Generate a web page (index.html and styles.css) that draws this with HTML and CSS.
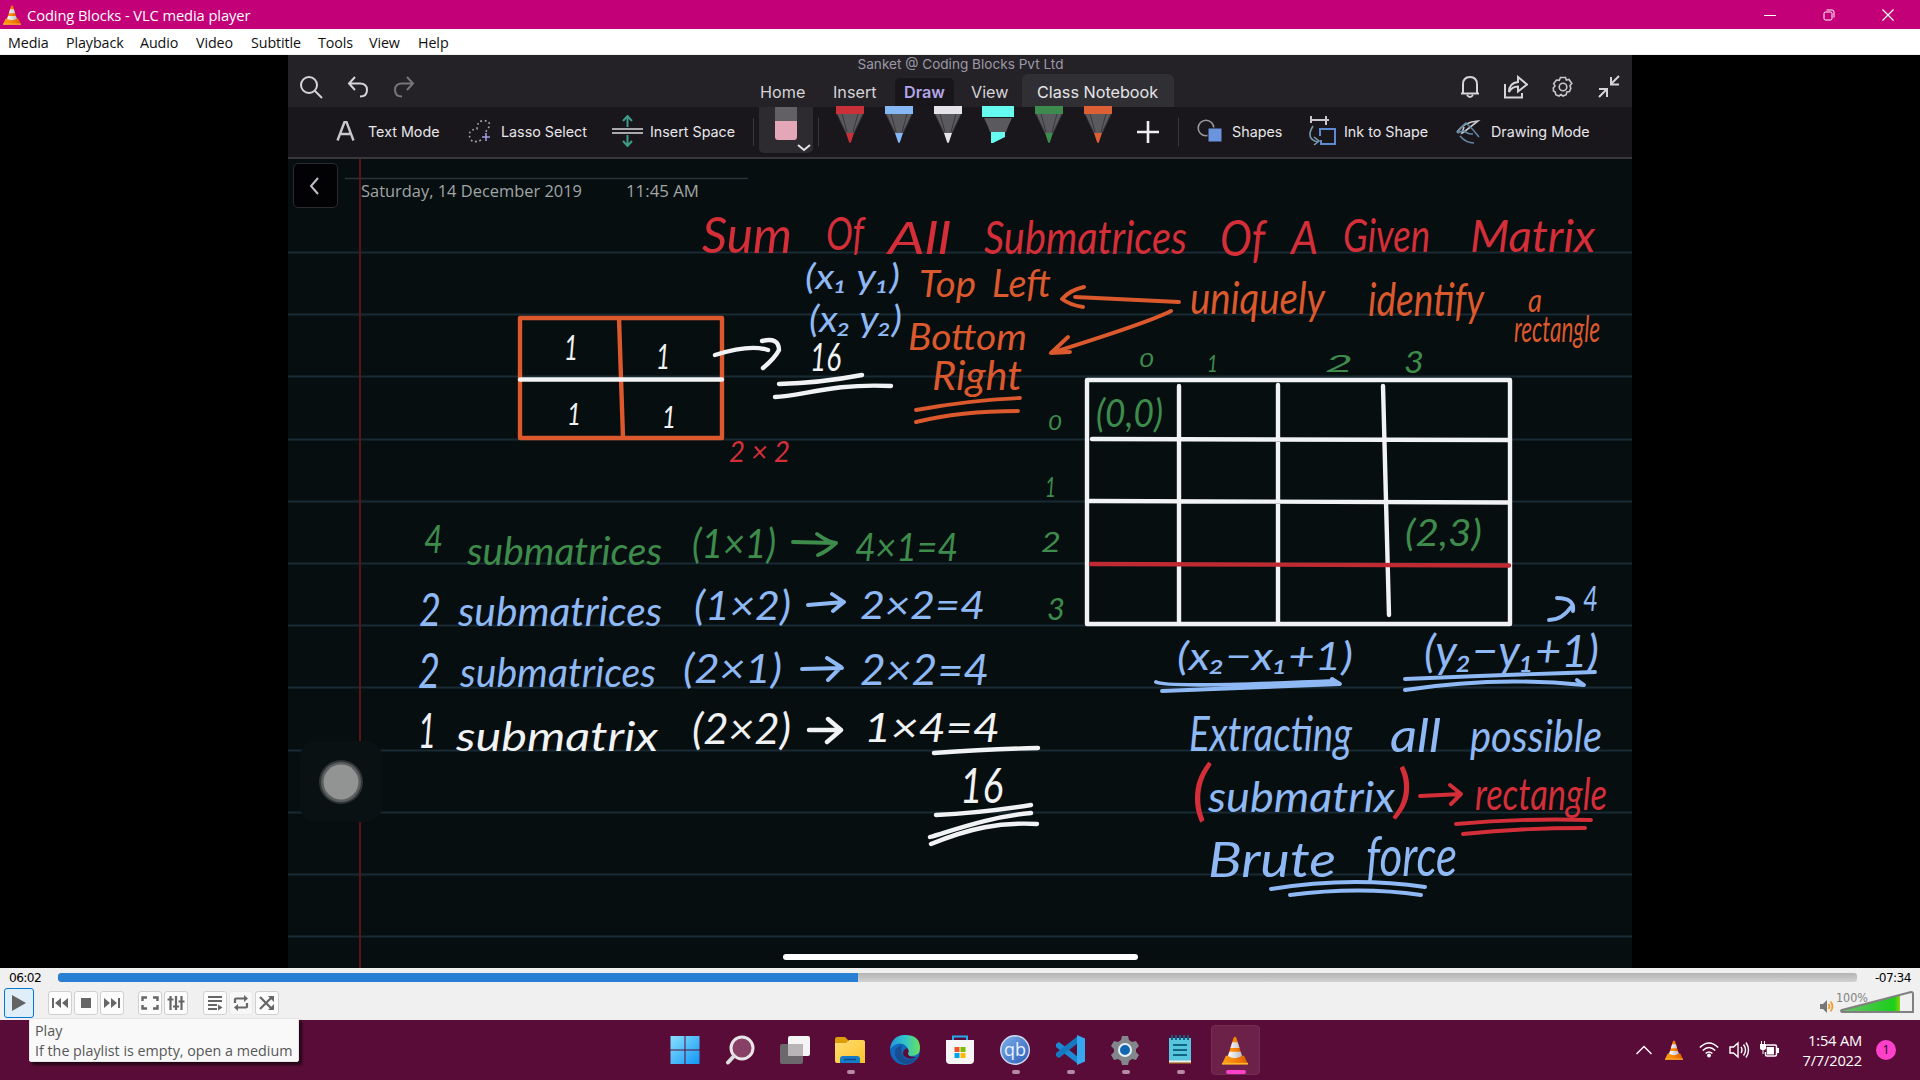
FILE: index.html
```html
<!DOCTYPE html>
<html lang="en">
<head>
<meta charset="utf-8">
<title>Coding Blocks - VLC media player</title>
<link rel="stylesheet" href="styles.css">
</head>
<body>
<svg class="defs" width="0" height="0" aria-hidden="true">
  <defs>
    <linearGradient id="coneOrange"><stop offset="0" stop-color="#ffa21a"/><stop offset=".6" stop-color="#f47b00"/><stop offset="1" stop-color="#d95f00"/></linearGradient>
    <linearGradient id="coneWhite"><stop offset="0" stop-color="#fff"/><stop offset="1" stop-color="#b9bcc0"/></linearGradient>
    <linearGradient id="winBlue" x2="1" y2="1"><stop offset="0" stop-color="#8ae0ff"/><stop offset="1" stop-color="#1196f5"/></linearGradient>
    <linearGradient id="edgeTop"><stop offset="0" stop-color="#2296dc"/><stop offset=".5" stop-color="#32c4c9"/><stop offset="1" stop-color="#68e05a"/></linearGradient>
    <linearGradient id="folder" x2="1" y2="1"><stop offset="0" stop-color="#ffdd72"/><stop offset="1" stop-color="#fcc32c"/></linearGradient>
    <linearGradient id="qb" x2="1" y2="1"><stop offset="0" stop-color="#7fb0ea"/><stop offset="1" stop-color="#2a5cb8"/></linearGradient>
    <linearGradient id="vol"><stop offset="0" stop-color="#6fbd6f"/><stop offset=".9" stop-color="#18d018"/><stop offset="1" stop-color="#8fd010"/></linearGradient>
    <symbol id="cone" viewBox="0 0 20 22">
      <path d="M3 15h14l3 6.500H0z" fill="url(#coneOrange)"/>
      <path d="M0 20.500h20v1.300H0z" fill="#ffb52e"/>
      <path d="M8.800 1.500Q10-.5 11.200 1.500L15.600 16Q10 20 4.400 16z" fill="url(#coneOrange)"/>
      <path d="M7.900 4.700h4.200l1.400 4.300h-7zM5.600 12h8.800l1 3.300Q10 18.500 4.600 15.300z" fill="url(#coneWhite)"/>
    </symbol>
    <symbol id="pen" viewBox="0 0 28 38">
      <path d="M0 0h28v8H0z" fill="currentColor"/>
      <path d="M1 8h26l-9 19h-8z" fill="#5a5a5e"/>
      <path d="M1 8l9 19M27 8l-9 19M6 8l5 18M22 8l-5 18" stroke="#39393d" fill="none"/>
      <path d="M10 27h8l-3 9q-1 2-2 0z" fill="currentColor"/>
    </symbol>
  </defs>
</svg>

<header class="titlebar">
  <svg class="app-icon" width="18" height="20"><use href="#cone"/></svg>
  <span class="app-title">Coding Blocks - VLC media player</span>
  <div class="win-buttons">
    <svg width="12" height="12"><path d="M0 6.500h12" stroke="#fff"/></svg>
    <svg width="12" height="12" fill="none" stroke="#fff"><rect x="1" y="3" width="8" height="8" rx="1.500"/><path d="M3.500 1h5.500q2 0 2 2v5.500"/></svg>
    <svg width="12" height="12"><path d="M.5.500l11 11M11.500.500l-11 11" stroke="#fff" stroke-width="1.200"/></svg>
  </div>
</header>
<nav class="menubar">
  <span class="m-media">Media</span><span class="m-playback">Playback</span><span class="m-audio">Audio</span><span class="m-video">Video</span><span class="m-subtitle">Subtitle</span><span class="m-tools">Tools</span><span class="m-view">View</span><span>Help</span>
</nav>

<main class="stage">
  <section class="notebook">
    <div class="nb-head">
      <div class="nb-left">
        <svg width="24" height="24" viewBox="0 0 24 24" fill="none" stroke="#d6d4d8" stroke-width="2"><circle cx="10" cy="10" r="8"/><path d="M16 16l7 7"/></svg>
        <svg width="22" height="22" viewBox="0 0 22 22" fill="none" stroke="#d6d4d8" stroke-width="2"><path d="M8 1L2 7.500 8 14M2 7.500h11q7 0 7 6.500t-7 6.500"/></svg>
        <svg width="22" height="22" viewBox="0 0 22 22" fill="none" stroke="#77757a" stroke-width="2"><path d="M14 1l6 6.500-6 6.500M20 7.500H9q-7 0-7 6.500t7 6.500"/></svg>
      </div>
      <div class="nb-center">
        <div class="nb-title">Sanket @ Coding Blocks Pvt Ltd</div>
        <div class="tabs">
          <span class="tab t-home">Home</span><span class="tab t-insert">Insert</span><span class="tab t-draw">Draw</span><span class="tab t-view">View</span><span class="tab t-class">Class Notebook</span>
        </div>
      </div>
      <div class="nb-right">
        <svg width="20" height="24" viewBox="0 0 20 24" fill="none" stroke="#d6d4d8" stroke-width="2"><path d="M1 18.500h18M3 18V9.500Q3 2 10 2t7 7.500V18M7 20q3 4 6 0"/></svg>
        <svg width="24" height="24" viewBox="0 0 24 24" fill="none" stroke="#d6d4d8" stroke-width="2"><path d="M1 9v13.500h17V18M5 17q0-9 9-10V2l9 7.500-9 7v-5q-6 0-9 5.500z"/></svg>
        <svg width="22" height="22" viewBox="0 0 22 22" fill="none" stroke="#c8c6ca" stroke-width="1.600"><path d="M8.500 1.500h5l.8 2.600 2.700-.6 2.800 4-1.800 2 .8 3-1.300 3-2.700.5-.6 2.700-3.200 1.300-2-1.500-2 1.500-3.200-1.300-.6-2.700-1.700-1L1.300 12l1.700-2-1.300-2.500L4.500 4l2.700.3z"/><circle cx="11" cy="11" r="3.800"/></svg>
        <svg width="22" height="24" viewBox="0 0 22 24" fill="none" stroke="#d6d4d8" stroke-width="2"><path d="M21 1l-8 8M13 2v7.500h8M1 22l8-8M1 14h8v8"/></svg>
      </div>
    </div>

    <div class="ribbon">
      <div class="tool r-text"><svg width="19" height="20" viewBox="0 0 19 20" fill="none" stroke="#c9c7cb" stroke-width="2.400"><path d="M1.500 19.500L8.500 1h2l7 18.500M4.500 13h10"/></svg><span>Text Mode</span></div>
      <div class="tool r-lasso"><svg width="24" height="25" viewBox="0 0 24 25" fill="none" stroke="#a8a6aa" stroke-width="1.600"><path d="M13 21Q4 25 2 19q-3-8 7-9Q9 2 16 1.500 23 2 21 8q-2 3-4 6" stroke-dasharray="1.800 2.600"/><path d="M18 14v8M14 18h8" stroke="#9f9be0"/></svg><span>Lasso Select</span></div>
      <div class="tool r-space"><svg width="31" height="32" viewBox="0 0 31 32" fill="none" stroke-width="2"><path d="M0 14h31M0 18h31" stroke="#aaa8ad"/><path d="M15.500 12V2M11 6l4.500-5L20 6M15.500 20v10M11 26l4.500 5 4.500-5" stroke="#3f9a86"/></svg><span>Insert Space</span></div>
      <i class="sep"></i>
      <div class="eraser"><svg width="54" height="46" viewBox="0 0 54 46"><path d="M16 0h22v14H16z" fill="#626065"/><path d="M16 14h22v16q0 3-3 3H19q-3 0-3-3z" fill="#e3a7b7"/><path d="M39 38l6 5 6-5" fill="none" stroke="#e4e2e6" stroke-width="2"/></svg></div>
      <i class="sep"></i>
      <div class="pens">
        <svg class="pen-red" width="28" height="38"><use href="#pen"/></svg>
        <svg class="pen-blue" width="28" height="38"><use href="#pen"/></svg>
        <svg class="pen-white" width="28" height="38"><use href="#pen"/></svg>
        <svg width="32" height="38" viewBox="0 0 32 38"><path d="M0 0h32v11H0z" fill="#66fbf0"/><path d="M2 12h28q-4 8-6 14H8Q6 20 2 12z" fill="#5a5a5e"/><path d="M9 26h14v5l-12 6H9z" fill="#66fbf0"/></svg>
        <svg class="pen-green" width="28" height="38"><use href="#pen"/></svg>
        <svg class="pen-orange" width="28" height="38"><use href="#pen"/></svg>
      </div>
      <svg class="plus" width="22" height="24" viewBox="0 0 22 24"><path d="M11 1v22M0 12h22" stroke="#f0eef2" stroke-width="2.600"/></svg>
      <i class="sep"></i>
      <div class="tool r-shapes"><svg width="26" height="24" viewBox="0 0 26 24"><circle cx="9" cy="9" r="7.800" fill="none" stroke="#9a989d" stroke-width="1.600"/><path d="M11 9h14v14H11z" fill="#6b94de" stroke="#19171b"/></svg><span>Shapes</span></div>
      <div class="tool r-ink"><svg width="28" height="30" viewBox="0 0 28 30" fill="none" stroke-width="2"><path d="M2 4h19M3 0v7M18 0v9" stroke="#c9c7cb"/><path d="M15 13h12v15H13v-4M12 20v-7h4" stroke="#5b8ad0"/><path d="M5 10q-8 13 5 16M6 21l5 4-5 4" stroke="#7a9cb0" stroke-width="1.600"/></svg><span>Ink to Shape</span></div>
      <div class="tool r-drawing"><svg width="25" height="25" viewBox="0 0 25 25" fill="none" stroke-width="1.600"><path d="M1 13Q8 3 22 2L8 13l-2 1 2-6" stroke="#c9c7cb"/><path d="M1 14q6-8 9-10 7 6 13 14M2 14q6-4 9 0 2 1 6 1M4 17q6 7 14 7" stroke="#6286a4"/></svg><span>Drawing Mode</span></div>
    </div>

    <div class="page">
      <svg class="ink" width="1344" height="809" viewBox="288 159 1344 809">
        <g class="rules"><path d="M288 252.500H1632M288 314.500H1632M288 376.500H1632M288 439.500H1632M288 501.500H1632M288 563.500H1632M288 625.500H1632M288 687.500H1632M288 750.500H1632M288 812.500H1632M288 874.500H1632M288 936.500H1632"/></g>
        <path d="M345 178.500H748" stroke="#2b3234" stroke-width="1.500"/>
        <path d="M360 159V968" stroke="#581417" stroke-width="2"/>
        <g class="date"><text x="361" y="196.500" textLength="221" lengthAdjust="spacingAndGlyphs">Saturday, 14 December 2019</text><text x="626" y="196.500" textLength="73" lengthAdjust="spacingAndGlyphs">11:45 AM</text></g>

        <g class="hand red">
          <text x="702" y="253" font-size="50" textLength="90" lengthAdjust="spacingAndGlyphs">Sum</text>
          <text x="826" y="250" font-size="46" textLength="38" lengthAdjust="spacingAndGlyphs">Of</text>
          <text x="888" y="254" font-size="44" textLength="63" lengthAdjust="spacingAndGlyphs">All</text>
          <text x="984" y="254" font-size="46" textLength="203" lengthAdjust="spacingAndGlyphs">Submatrices</text>
          <text x="1220" y="256" font-size="50" textLength="45" lengthAdjust="spacingAndGlyphs">Of</text>
          <text x="1291" y="254" font-size="46" textLength="27" lengthAdjust="spacingAndGlyphs">A</text>
          <text x="1343" y="252" font-size="46" textLength="87" lengthAdjust="spacingAndGlyphs">Given</text>
          <text x="1470" y="252" font-size="44" textLength="125" lengthAdjust="spacingAndGlyphs">Matrix</text>
          <text x="729" y="462" font-size="29" textLength="61" lengthAdjust="spacingAndGlyphs">2 × 2</text>
          <text x="1192" y="813" font-size="66" textLength="18" lengthAdjust="spacingAndGlyphs">(</text>
          <text x="1394" y="811" font-size="58" textLength="18" lengthAdjust="spacingAndGlyphs">)</text>
          <text x="1475" y="810" font-size="44" textLength="132" lengthAdjust="spacingAndGlyphs">rectangle</text>
          <path d="M1420 796L1461 794M1450 785L1461 794 1451 804M1456 824Q1520 818 1591 820M1463 834Q1520 828 1585 828"/>
        </g>
        <g class="hand blue">
          <text x="805" y="289" font-size="34" textLength="95" lengthAdjust="spacingAndGlyphs">(x₁ y₁)</text>
          <text x="809" y="332" font-size="36" textLength="93" lengthAdjust="spacingAndGlyphs">(x₂ y₂)</text>
          <text x="419" y="626" font-size="46" textLength="22" lengthAdjust="spacingAndGlyphs">2</text>
          <text x="458" y="626" font-size="40" textLength="204" lengthAdjust="spacingAndGlyphs">submatrices</text>
          <text x="694" y="620" font-size="40" textLength="97" lengthAdjust="spacingAndGlyphs">(1×2)</text>
          <text x="860" y="619" font-size="38" textLength="125" lengthAdjust="spacingAndGlyphs">2×2=4</text>
          <text x="418" y="688" font-size="48" textLength="22" lengthAdjust="spacingAndGlyphs">2</text>
          <text x="460" y="687" font-size="40" textLength="196" lengthAdjust="spacingAndGlyphs">submatrices</text>
          <text x="683" y="683" font-size="40" textLength="99" lengthAdjust="spacingAndGlyphs">(2×1)</text>
          <text x="860" y="685" font-size="42" textLength="129" lengthAdjust="spacingAndGlyphs">2×2=4</text>
          <text x="1177" y="670" font-size="38" textLength="176" lengthAdjust="spacingAndGlyphs">(x₂−x₁+1)</text>
          <text x="1424" y="667" font-size="44" textLength="175" lengthAdjust="spacingAndGlyphs">(y₂−y₁+1)</text>
          <text x="1583" y="611" font-size="34" textLength="15" lengthAdjust="spacingAndGlyphs">4</text>
          <text x="1189" y="751" font-size="48" textLength="163" lengthAdjust="spacingAndGlyphs">Extracting</text>
          <text x="1390" y="752" font-size="46" textLength="51" lengthAdjust="spacingAndGlyphs">all</text>
          <text x="1470" y="752" font-size="45" textLength="132" lengthAdjust="spacingAndGlyphs">possible</text>
          <text x="1208" y="812" font-size="42" textLength="187" lengthAdjust="spacingAndGlyphs">submatrix</text>
          <text x="1208" y="877" font-size="49" textLength="128" lengthAdjust="spacingAndGlyphs">Brute</text>
          <text x="1366" y="876" font-size="56" textLength="91" lengthAdjust="spacingAndGlyphs">force</text>
          <path d="M808 605L844 602M832 594L844 602 833 611M802 669L842 668M827 658L841 667 828 680M1549 620Q1562 620 1571 607M1557 598Q1575 598 1573 611M1156 682Q1165 688 1335 681M1162 691Q1260 687 1340 684L1332 679M1405 679Q1500 675 1595 672M1405 690Q1495 676 1584 685L1577 680M1271 889Q1350 876 1425 887M1290 895Q1360 886 1421 895"/>
        </g>
        <g class="hand orange">
          <text x="919" y="297" font-size="37" textLength="57" lengthAdjust="spacingAndGlyphs">Top</text>
          <text x="992" y="297" font-size="38" textLength="59" lengthAdjust="spacingAndGlyphs">Left</text>
          <text x="908" y="350" font-size="37" textLength="119" lengthAdjust="spacingAndGlyphs">Bottom</text>
          <text x="932" y="390" font-size="40" textLength="90" lengthAdjust="spacingAndGlyphs">Right</text>
          <text x="1190" y="314" font-size="45" textLength="135" lengthAdjust="spacingAndGlyphs">uniquely</text>
          <text x="1368" y="316" font-size="47" textLength="116" lengthAdjust="spacingAndGlyphs">identify</text>
          <text x="1528" y="312" font-size="32" textLength="14" lengthAdjust="spacingAndGlyphs">a</text>
          <text x="1514" y="342" font-size="37" textLength="86" lengthAdjust="spacingAndGlyphs">rectangle</text>
          <path d="M1075 297L1179 302M1084 287Q1070 290 1062 299 1070 305 1083 307M1171 311Q1150 322 1051 353M1068 337L1051 353 1070 352M916 410Q970 400 1020 398M916 422Q960 411 1018 411"/>
          <path class="thick" d="M520 318H722V438H520zM619 318L623 438"/>
        </g>
        <g class="hand green">
          <text x="1139" y="367" font-size="20" textLength="15" lengthAdjust="spacingAndGlyphs">0</text>
          <text x="1207" y="372" font-size="24" textLength="11" lengthAdjust="spacingAndGlyphs">1</text>
          <text x="1325" y="372" font-size="23" textLength="28" lengthAdjust="spacingAndGlyphs">2</text>
          <text x="1404" y="373" font-size="31" textLength="20" lengthAdjust="spacingAndGlyphs">3</text>
          <text x="1048" y="430" font-size="22" textLength="14" lengthAdjust="spacingAndGlyphs">0</text>
          <text x="1045" y="497" font-size="27" textLength="11" lengthAdjust="spacingAndGlyphs">1</text>
          <text x="1041" y="552" font-size="27" textLength="20" lengthAdjust="spacingAndGlyphs">2</text>
          <text x="1047" y="620" font-size="31" textLength="18" lengthAdjust="spacingAndGlyphs">3</text>
          <text x="1096" y="427" font-size="38" textLength="67" lengthAdjust="spacingAndGlyphs">(0,0)</text>
          <text x="1405" y="546" font-size="37" textLength="77" lengthAdjust="spacingAndGlyphs">(2,3)</text>
          <text x="424" y="553" font-size="38" textLength="19" lengthAdjust="spacingAndGlyphs">4</text>
          <text x="467" y="565" font-size="38" textLength="195" lengthAdjust="spacingAndGlyphs">submatrices</text>
          <text x="692" y="558" font-size="40" textLength="84" lengthAdjust="spacingAndGlyphs">(1×1)</text>
          <text x="855" y="561" font-size="38" textLength="103" lengthAdjust="spacingAndGlyphs">4×1=4</text>
          <path d="M793 542L836 543M817 534Q828 542 836 543 826 552 818 555"/>
        </g>
        <g class="hand white">
          <path class="thick" d="M1087 380H1510V624H1087zM1179 386V624M1278 385V624M1383 386L1389 615M1092 439L1510 440M1090 501L1510 502.500M520 379.500H722"/>
          <path class="thick cut" d="M1091 564L1509 565.500"/>
          <text x="564" y="360" font-size="34" textLength="14" lengthAdjust="spacingAndGlyphs">1</text>
          <text x="656" y="369" font-size="34" textLength="14" lengthAdjust="spacingAndGlyphs">1</text>
          <text x="567" y="425" font-size="30" textLength="14" lengthAdjust="spacingAndGlyphs">1</text>
          <text x="662" y="428" font-size="30" textLength="14" lengthAdjust="spacingAndGlyphs">1</text>
          <text x="810" y="371" font-size="38" textLength="31" lengthAdjust="spacingAndGlyphs">16</text>
          <path class="thick" d="M715 355Q750 344 768 350M762 341Q779 337 779 350 775 358 763 368M779 384Q820 383 862 375M775 397C800 397 830 383 891 386"/>
          <text x="418" y="748" font-size="48" textLength="18" lengthAdjust="spacingAndGlyphs">1</text>
          <text x="456" y="751" font-size="41" textLength="202" lengthAdjust="spacingAndGlyphs">submatrix</text>
          <text x="692" y="744" font-size="42" textLength="99" lengthAdjust="spacingAndGlyphs">(2×2)</text>
          <text x="864" y="742" font-size="40" textLength="136" lengthAdjust="spacingAndGlyphs">1×4=4</text>
          <text x="960" y="803" font-size="48" textLength="43" lengthAdjust="spacingAndGlyphs">16</text>
          <path class="thick" d="M809 730L841 730M828 719L841 730 827 742M934 753Q990 749 1038 748M936 815Q980 813 1031 805M930 837C960 828 990 817 1031 813M931 844C970 828 1000 822 1037 824"/>
        </g>
        <rect x="300" y="741" width="82" height="81" rx="16" fill="#0a1113"/>
        <circle cx="341" cy="782" r="22" fill="#303536"/><circle cx="341" cy="782" r="20" fill="#5a5e5f"/><circle cx="341" cy="782" r="17.500" fill="#929494"/>
        <rect x="783" y="954" width="355" height="6" rx="3" fill="#fff"/>
      </svg>
      <div class="back"><svg width="12" height="20" viewBox="0 0 12 20"><path d="M9 2L2 10l7 8" fill="none" stroke="#c4bccb" stroke-width="2"/></svg></div>
    </div>
  </section>
</main>

<footer class="controls">
  <div class="seek"><span class="t-now">06:02</span><div class="track"><div class="fill"></div></div><span class="t-left">-07:34</span></div>
  <div class="buttons">
    <div class="btn play"><svg width="14" height="16"><path d="M0 0l14 8-14 8z" fill="#636363"/></svg></div>
    <div class="group g1">
      <div class="btn"><svg width="16" height="12" fill="#666"><path d="M0 1h2v10H0zM9 1v10L3 6zM16 1v10l-6-5z"/></svg></div>
      <div class="btn"><svg width="10" height="10"><path d="M0 0h10v10H0z" fill="#666"/></svg></div>
      <div class="btn"><svg width="16" height="12" fill="#666"><path d="M14 1h2v10h-2zM7 1v10l6-5zM0 1v10l6-5z"/></svg></div>
    </div>
    <div class="group g2">
      <div class="btn"><svg width="18" height="14" fill="none" stroke="#666" stroke-width="2.400"><path d="M1.500 5V1.500H6M12 1.500h4.500V5M16.500 9v3.500H12M6 12.500H1.500V9"/></svg></div>
      <div class="btn"><svg width="18" height="16" stroke="#666" stroke-width="2.200"><path d="M3.500 1v14M9 1v14M14.500 1v14M.5 4.500h6M6 11.500h6M11.500 6.500h6"/></svg></div>
    </div>
    <div class="group g3">
      <div class="btn"><svg width="16" height="16" fill="#666"><path d="M1 1h14v2H1zM1 5h14v2H1zM1 9h9v2H1zM1 13h9v2H1zM11 9.500l4.500 3-4.500 3z"/></svg></div>
      <div class="btn faint"><svg width="16" height="16"><path d="M2 8V4.500Q2 3.500 3 3.500h9M14 8v3.500q0 1-1 1H4" fill="none" stroke="#666" stroke-width="2.200"/><path d="M11 0l4 3.500L11 7zM5 9l-4 3.500L5 16z" fill="#666"/></svg></div>
      <div class="btn"><svg width="16" height="16"><path d="M1 2l12 12M1 14L13 2" stroke="#666" stroke-width="2.200"/><path d="M9 1h6v6zM9 15h6V9z" fill="#666"/></svg></div>
    </div>
    <div class="volume">
      <svg width="96" height="26" viewBox="0 0 96 26"><path d="M0 14h3l4-4v13l-4-4H0z" fill="#777"/><path d="M8.500 14q2 2.500 0 5M10.500 11.500q4 5 0 10" fill="none" stroke="#f49b28" stroke-width="1.700"/><path d="M22 20L80 5v17H22z" fill="url(#vol)"/><path d="M22 20L91 2q2 0 2 2v18H22q-2-1 0-2z" fill="none" stroke="#808080" stroke-width="2"/><text x="16" y="12" textLength="32" lengthAdjust="spacingAndGlyphs" class="voltext">100%</text></svg>
    </div>
  </div>
</footer>

<div class="taskbar">
  <div class="apps">
    <div class="app"><svg width="30" height="30"><path d="M.5 1h14v13.500H.5zM15.500 1h14v13.500h-14zM.5 15.500h14V29H.5zM15.500 15.500h14V29h-14z" fill="url(#winBlue)"/></svg></div>
    <div class="app"><svg width="30" height="30"><circle cx="17" cy="13" r="11" fill="#884067" stroke="#e8e6e8" stroke-width="3"/><path d="M9 21l-6 6.500" stroke="#dedede" stroke-width="4" stroke-linecap="round"/></svg></div>
    <div class="app"><svg width="32" height="30"><rect x="1" y="9" width="23" height="20" rx="2" fill="#6b696b"/><rect x="9" y="1" width="22" height="20" rx="2" fill="#f4f4f4"/><path d="M9 9h15v12H9z" fill="#b8b4b7"/></svg></div>
    <div class="app run"><svg width="32" height="30"><path d="M1 4q0-2 2-2h8l3 3v5H1z" fill="#dd9d08"/><path d="M1 8h11l3-3h14q2 0 2 2v21H3q-2 0-2-2z" fill="url(#folder)"/><path d="M6 28v-4q0-3 3-3h14q3 0 3 3v4z" fill="#147bc9"/><path d="M10 24.500h12" stroke="#0d4a89" stroke-width="1.500"/></svg></div>
    <div class="app"><svg width="30" height="30" viewBox="0 0 30 30"><circle cx="15" cy="15" r="15" fill="#1168bd"/><path d="M0 14Q2 0 15 0q15 0 15 13 0 8-9 8-5 0-4-4 2-3-1-6-7-6-16 3z" fill="url(#edgeTop)"/><path d="M12 10q-8 2-7 10 3 9 12 9 7-1 11-6-11 4-15-2-3-5-1-11z" fill="#164e91"/><path d="M17 13q3 3 1 5 0 4 6 4h3q-8 4-13-1-3-5 3-8z" fill="#5b0c38"/></svg></div>
    <div class="app"><svg width="30" height="30"><path d="M8 7V1.500h14V7" fill="none" stroke="#27a9ec" stroke-width="2"/><path d="M1 5h28v20q0 4-4 4H5q-4 0-4-4z" fill="#f6f6f6"/><path d="M9.500 12h5v5h-5z" fill="#f25022"/><path d="M15.500 12h5v5h-5z" fill="#7fba00"/><path d="M9.500 18h5v5h-5z" fill="#00a4ef"/><path d="M15.500 18h5v5h-5z" fill="#ffb900"/></svg></div>
    <div class="app run"><svg width="30" height="30"><circle cx="15" cy="15" r="14.300" fill="url(#qb)" stroke="#d0dcf2" stroke-width="1.400"/><text x="15" y="21" text-anchor="middle" class="qb">qb</text></svg></div>
    <div class="app run"><svg width="30" height="30"><path d="M1 9l3-2 19 15v7L1 12z" fill="#1c8ad2"/><path d="M1 21l3 2L23 8V1L1 18z" fill="#1679c0"/><path d="M22 0l8 3.500v23L22 30z" fill="#35a8f0"/></svg></div>
    <div class="app run"><svg width="30" height="30" viewBox="0 0 30 30"><path d="M12 1h6l1 4 3 2 4-1 3 5-3 3v3l3 3-3 5-4-1-3 2-1 4h-6l-1-4-3-2-4 1-3-5 3-3v-3l-3-3 3-5 4 1 3-2z" fill="#83868a"/><circle cx="15" cy="15" r="6" fill="#1265b0" stroke="#e7f0f7" stroke-width="2"/></svg></div>
    <div class="app run"><svg width="24" height="30"><path d="M1 3h22v24H1z" fill="#56c5de"/><path d="M1 26h22v3H1z" fill="#8f4b1d"/><path d="M1 25.500h22v2H1z" fill="#eee"/><path d="M4 0v5M8 0v5M12 0v5M16 0v5M20 0v5" stroke="#125f80" stroke-width="2"/><path d="M5 10h14M5 15h14M5 20h14" stroke="#116582" stroke-width="2"/></svg></div>
    <div class="app run active"><svg width="26" height="29"><use href="#cone"/></svg></div>
  </div>
  <div class="tray">
    <svg width="18" height="10" class="chev"><path d="M1.500 9L9 1.500 16.500 9" fill="none" stroke="#fff" stroke-width="1.400"/></svg>
    <svg width="18" height="20" class="tcone"><use href="#cone"/></svg>
    <svg width="20" height="16" class="wifi" fill="none" stroke="#fff" stroke-width="1.500"><path d="M.8 5.500q9.200-9 18.400 0M3.800 8.500q6.200-6 12.400 0M6.600 11.500q3.400-3 6.800 0"/><circle cx="10" cy="13.500" r="1.200" fill="#fff"/></svg>
    <svg width="21" height="18" class="sound" fill="none" stroke="#fff" stroke-width="1.400"><path d="M1 6h3.500L9 2v14l-4.500-4H1zM12 6q2 3 0 6M14.500 3.500q4 5.500 0 11M17 1.500q5 7.500 0 15"/></svg>
    <svg width="20" height="18" class="battery"><path d="M6 4h10q1.500 0 1.500 1.500v8q0 1.500-1.500 1.500H8q-1.500 0-1.500-1.500V11" fill="none" stroke="#fff" stroke-width="1.500"/><path d="M7.500 6H15v7.500H8zM18 7h2v5h-2zM1 3h6v4q0 2-3 2T1 7zM2 0h1v3H2zM5 0h1v3H5zM3.500 9h1v4h-1z" fill="#fff"/></svg>
    <div class="clock"><div>1:54 AM</div><div>7/7/2022</div></div>
    <div class="badge">1</div>
  </div>
</div>
<div class="tooltip"><div>Play</div><div>If the playlist is empty, open a medium</div></div>
</body>
</html>
```
FILE: styles.css
```css
* { box-sizing: border-box; }
body {
  margin: 0; width: 1920px; height: 1080px; overflow: hidden;
  display: flex; flex-direction: column; background: #000;
  font-family: "Open Sans", "Noto Sans", sans-serif;
}
svg { display: block; flex: none; }
.defs { position: absolute; }

.titlebar { height: 29px; background: #c30077; color: #fff; display: flex; align-items: center; padding-left: 3px; font-size: 14.700px; letter-spacing: -.09px; }
.app-title { margin-left: 6px; white-space: nowrap; }
.win-buttons { margin-left: auto; display: flex; gap: 47px; padding-right: 26px; }

.menubar { height: 26px; background: #fff; border-bottom: 1px solid #f0f0f0; color: #111; display: flex; align-items: center; padding: 1px 0 0 8px; font-size: 14.300px; letter-spacing: -.1px; white-space: nowrap; }
.m-media { width: 58px; } .m-playback { width: 74px; } .m-audio { width: 56px; } .m-video { width: 55px; }
.m-subtitle { width: 67px; } .m-tools { width: 51px; } .m-view { width: 49px; }

.stage { height: 913px; display: flex; justify-content: center; background: #000; }
.notebook { width: 1344px; font-family: Inter, sans-serif; }
.nb-head { height: 52px; background: #242226; display: flex; }
.nb-left { display: flex; align-items: center; gap: 24px; width: 430px; padding: 11px 0 0 11px; }
.nb-center { width: 484px; }
.nb-title { height: 19px; line-height: 19px; text-align: center; font-size: 13.600px; color: #9d99a6; padding-left: 1px; }
.tabs { display: flex; align-items: flex-end; padding-left: 27px; font-size: 16.200px; color: #d5d3d8; white-space: nowrap; }
.tab { height: 29px; display: flex; align-items: center; padding: 0 0 2px 15px; }
.t-home { width: 73px; } .t-insert { width: 62px; }
.t-draw { width: 59px; background: #18161b; color: #b3a5e6; font-weight: 600; border-radius: 5px 5px 0 0; margin-left: 15px; padding-left: 9px; }
.t-view { width: 68px; padding-left: 17px; }
.t-class { width: 152px; height: 33px; background: #303034; color: #e6e4e8; border-radius: 6px 6px 0 0; padding-top: 2px; padding-bottom: 0; }
.nb-right { display: flex; align-items: center; gap: 24px; margin-left: auto; padding: 11px 12px 0 0; }

.ribbon { height: 52px; background: #19171b; border-bottom: 2px solid #38383b; display: flex; align-items: center; color: #e8e6ea; font-size: 14.300px; white-space: nowrap; }
.tool { display: flex; align-items: center; padding-bottom: 2px; flex: none; }
.r-text { margin-left: 48px; width: 132px; gap: 13px; }
.r-lasso { width: 144px; gap: 9px; }
.r-space { width: 141px; gap: 7px; }
.sep { width: 1px; height: 28px; background: #39373c; flex: none; }
.eraser { width: 54px; height: 46px; background: #2d2b30; border-radius: 0 0 5px 5px; align-self: flex-start; margin: 0 5px; }
.pens { display: flex; width: 276px; justify-content: space-between; align-self: flex-start; margin: -1px 0 0 17px; }
.pen-red { color: #ca3037; } .pen-blue { color: #86b8f5; } .pen-white { color: #e5e2e9; } .pen-green { color: #3d8c4e; } .pen-orange { color: #dd6035; }
.plus { margin: 0 19px 0 25px; }
.r-shapes { width: 111px; gap: 9px; margin-left: 18px; }
.r-ink { width: 148px; gap: 8px; }
.r-drawing { gap: 10px; }

.page { height: 809px; background: #070e10; position: relative; }
.back { position: absolute; left: 5px; top: 4px; width: 45px; height: 45px; background: #020204; border: 1.500px solid #2b2b2f; border-radius: 5px; display: flex; align-items: center; justify-content: center; padding-right: 2px; }
.rules path { stroke: #192a34; stroke-width: 1.800; }
.date text { font-family: "Open Sans", "Noto Sans", sans-serif; font-size: 16.800px; fill: #a0a5a5; }
.hand { font-family: Lato, sans-serif; font-style: italic; stroke-linecap: round; stroke-linejoin: round; }
.hand path { fill: none; stroke-width: 3.900; }
.hand .thick { stroke-width: 4.400; }
.red text { fill: #d42e39; } .red path { stroke: #d42e39; }
.blue text { fill: #8fb9f5; } .blue path { stroke: #8fb9f5; }
.orange text { fill: #dc592d; } .orange path { stroke: #dc592d; }
.green text { fill: #3e8c4c; } .green path { stroke: #3e8c4c; }
.white text { fill: #f1f2f3; } .white path { stroke: #f1f2f3; }
.white .cut { stroke: #c02a33; }

.controls { height: 52px; background: #f0f0f0; font-family: "DejaVu Sans", sans-serif; }
.seek { height: 20px; display: flex; align-items: center; font-size: 12.200px; letter-spacing: -.6px; color: #000; white-space: nowrap; padding-bottom: 1px; }
.t-now { width: 58px; padding-left: 9px; }
.track { width: 1799px; height: 9px; border-radius: 3px; background: linear-gradient(#b4b4b4, #d2d2d2); overflow: hidden; }
.fill { width: 800px; height: 9px; background: #2880d4; border-radius: 3px 0 0 3px; }
.t-left { margin-left: 18px; }
.buttons { height: 30px; display: flex; align-items: center; padding-left: 4px; }
.btn { width: 24px; height: 24px; border: 1.500px solid #d0d0d0; border-radius: 3px; background: #fcfcfc; display: flex; align-items: center; justify-content: center; }
.play { width: 30px; height: 30px; border-color: #0078d4; background: #e0eef9; }
.faint { border-color: #e9e9e9; background: #f7f7f7; }
.group { display: flex; gap: 2px; }
.g1, .g2 { margin-left: 14px; } .g3 { margin-left: 15px; }
.volume { margin-left: auto; padding-right: 4px; }
.voltext { font-size: 12.500px; fill: #828282; }

.taskbar { height: 60px; background: #5a0c38; display: flex; }
.apps { display: flex; align-items: center; gap: 6px; margin-left: 660.500px; }
.app { width: 49px; height: 50px; display: flex; align-items: center; justify-content: center; position: relative; border-radius: 4px; }
.run::after { content: ""; position: absolute; left: 21px; bottom: 1px; width: 8px; height: 4px; border-radius: 2px; background: #b58ca4; }
.active { background: #6c2149; border: 1px solid #762d54; }
.active::after { left: 14px; bottom: 0; width: 20px; background: #ff40cb; }
.qb { font-family: "Open Sans", sans-serif; font-size: 18px; fill: #eaf2ff; }
.tray { margin-left: auto; display: flex; align-items: center; color: #fff; padding-right: 24px; }
.tcone { margin-left: 12px; } .wifi { margin-left: 16px; } .sound { margin-left: 10px; } .battery { margin-left: 9px; }
.clock { width: 83px; text-align: right; font-size: 14.700px; line-height: 20px; letter-spacing: -.2px; }
.badge { width: 20px; height: 20px; border-radius: 50%; background: #ff40cb; color: #180010; font-size: 12.500px; line-height: 20px; text-align: center; margin-left: 14px; }

.tooltip { position: absolute; left: 29px; top: 1018px; width: 270px; height: 44px; padding: 2px 5px; background: #f9f9f9; border: 1px solid #e5e5e5; border-radius: 2px; box-shadow: 3px 3px 3px rgba(0,0,0,.6); color: #575757; font-size: 14.300px; line-height: 19.500px; white-space: nowrap; }
```
